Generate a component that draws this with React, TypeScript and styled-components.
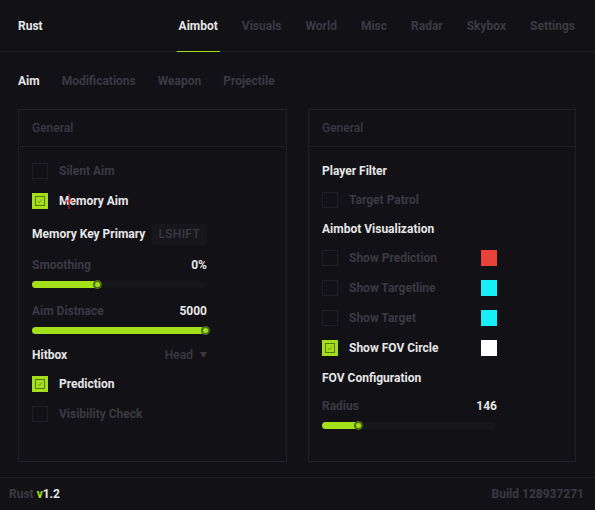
import styled, { createGlobalStyle } from 'styled-components'

const GlobalStyle = createGlobalStyle`
    html, body {
        margin: 0;
        padding: 0;
        background: #121115;
    }
    * { box-sizing: border-box; }
`

const LIME = '#a3e01a'
const TEXT = '#e6e6e8'
const DIM = '#3b3a42'

const Shell = styled.div`
    width: 595px;
    height: 510px;
    background: #121115;
    font-family: Roboto, 'Liberation Sans', sans-serif;
    font-weight: 700;
    font-size: 12px;
    color: ${TEXT};
    display: flex;
    flex-direction: column;
    position: relative;
    overflow: hidden;
`

const Header = styled.header`
    height: 52px;
    flex-shrink: 0;
    border-bottom: 1px solid #1f1e23;
    display: flex;
    align-items: center;
    padding: 0 20px 0 18px;
`

const Brand = styled.span`
    flex: 1;
    color: ${TEXT};
`

const Tabs = styled.nav`
    display: flex;
    gap: 24px;
    height: 100%;
`

const Tab = styled.span<{ $active?: boolean }>`
    position: relative;
    display: flex;
    align-items: center;
    color: ${(p) => (p.$active ? TEXT : DIM)};

    &::after {
        content: '';
        display: ${(p) => (p.$active ? 'block' : 'none')};
        position: absolute;
        left: -2px;
        right: -2px;
        bottom: -1px;
        height: 1px;
        background: ${LIME};
    }
`

const SubTabs = styled.div`
    height: 57px;
    flex-shrink: 0;
    display: flex;
    align-items: center;
    gap: 22px;
    padding: 0 18px;
`

const SubTab = styled.span<{ $active?: boolean }>`
    color: ${(p) => (p.$active ? TEXT : DIM)};
`

const Columns = styled.div`
    display: grid;
    grid-template-columns: 269px 268px;
    gap: 21px;
    padding: 0 18px;
`

const Panel = styled.section`
    height: 353px;
    border: 1px solid #211f25;
`

const PanelHead = styled.div`
    height: 37px;
    border-bottom: 1px solid #1f1e23;
    display: flex;
    align-items: center;
    padding-left: 13px;
    color: ${DIM};
    font-weight: 500;
`

const PanelBody = styled.div<{ $top: number }>`
    width: 188px;
    padding: ${(p) => p.$top}px 0 0 13px;
    display: flex;
    flex-direction: column;
`

const Row = styled.div<{ $h: number; $mt?: number }>`
    height: ${(p) => p.$h}px;
    margin-top: ${(p) => p.$mt ?? 0}px;
    display: flex;
    align-items: center;
    justify-content: space-between;
`

const CheckWrap = styled.div`
    display: flex;
    align-items: center;
    gap: 11px;
`

const Box = styled.span<{ $on?: boolean }>`
    width: 16px;
    height: 16px;
    display: flex;
    align-items: center;
    justify-content: center;
    border: 1px solid ${(p) => (p.$on ? LIME : '#1f1e24')};
    background: ${(p) => (p.$on ? LIME : 'transparent')};
`

const BoxInner = styled.span`
    width: 10px;
    height: 10px;
    border: 1px solid #55761a;
    display: flex;
    align-items: center;
    justify-content: center;
`

const Label = styled.span<{ $dim?: boolean }>`
    color: ${(p) => (p.$dim ? DIM : TEXT)};
`

const Key = styled.span`
    height: 21px;
    padding: 0 7px;
    display: flex;
    align-items: center;
    background: #17161a;
    border-radius: 3px;
    color: ${DIM};
    font-weight: 500;
    letter-spacing: 0.3px;
`

const Select = styled.span`
    color: ${DIM};
    font-weight: 500;
    display: flex;
    align-items: center;
    gap: 7px;
`

const Swatch = styled.span<{ $color: string }>`
    width: 16px;
    height: 16px;
    background: ${(p) => p.$color};
`

const Track = styled.div<{ $mt: number }>`
    margin-top: ${(p) => p.$mt}px;
    height: 7px;
    width: 174px;
    border-radius: 4px;
    background: #17161a;
    position: relative;
`

const Fill = styled.div`
    height: 100%;
    border-radius: 4px;
    background: ${LIME};
    position: relative;
`

const Thumb = styled.span`
    position: absolute;
    right: -4px;
    top: -1px;
    width: 9px;
    height: 9px;
    border-radius: 50%;
    background: ${LIME};
    border: 2px solid #4e6a12;
`

const Footer = styled.footer`
    margin-top: auto;
    height: 33px;
    border-top: 1px solid #1f1e23;
    display: flex;
    align-items: center;
    justify-content: space-between;
    padding: 0 11px 0 9px;
    color: ${DIM};
`

const Green = styled.span`
    color: ${LIME};
`

const White = styled.span`
    color: ${TEXT};
`

const Cursor = styled.svg`
    position: absolute;
    left: 64px;
    top: 194px;
`

function Check({ label, on, swatch }: { label: string; on?: boolean; swatch?: string }) {
    return (
        <Row $h={30}>
            <CheckWrap>
                <Box $on={on}>
                    {on && (
                        <BoxInner>
                            <svg width="6" height="6" viewBox="0 0 6 6">
                                <path d="M1 3.2 L2.4 4.5 L5 1.5" stroke="#6c9a18" strokeWidth="1" fill="none" />
                            </svg>
                        </BoxInner>
                    )}
                </Box>
                <Label $dim={!on}>{label}</Label>
            </CheckWrap>
            {swatch && <Swatch $color={swatch} />}
        </Row>
    )
}

function Slider({ label, value, pct, gap }: { label: string; value: string; pct: number; gap: number }) {
    return (
        <>
            <Row $h={20} $mt={gap}>
                <Label $dim>{label}</Label>
                <Label>{value}</Label>
            </Row>
            <Track $mt={6}>
                <Fill style={{ width: `${pct}%` }}>
                    <Thumb />
                </Fill>
            </Track>
        </>
    )
}

export default function App() {
    const tabs = ['Aimbot', 'Visuals', 'World', 'Misc', 'Radar', 'Skybox', 'Settings']
    const subTabs = ['Aim', 'Modifications', 'Weapon', 'Projectile']

    return (
        <Shell>
            <GlobalStyle />
            <Header>
                <Brand>Rust</Brand>
                <Tabs>
                    {tabs.map((t, i) => (
                        <Tab key={t} $active={i === 0}>{t}</Tab>
                    ))}
                </Tabs>
            </Header>
            <SubTabs>
                {subTabs.map((t, i) => (
                    <SubTab key={t} $active={i === 0}>{t}</SubTab>
                ))}
            </SubTabs>
            <Columns>
                <Panel>
                    <PanelHead>General</PanelHead>
                    <PanelBody $top={9}>
                        <Check label="Silent Aim" />
                        <Check label="Memory Aim" on />
                        <Row $h={36}>
                            <Label>Memory Key Primary</Label>
                            <Key>LSHIFT</Key>
                        </Row>
                        <Slider label="Smoothing" value="0%" pct={38} gap={3} />
                        <Slider label="Aim Distnace" value="5000" pct={100} gap={13} />
                        <Row $h={20} $mt={11}>
                            <Label>Hitbox</Label>
                            <Select>
                                Head
                                <svg width="7" height="6" viewBox="0 0 7 6">
                                    <path d="M0 0 H7 L3.5 6 Z" fill={DIM} />
                                </svg>
                            </Select>
                        </Row>
                        <Row $h={4} />
                        <Check label="Prediction" on />
                        <Check label="Visibility Check" />
                    </PanelBody>
                </Panel>
                <Panel>
                    <PanelHead>General</PanelHead>
                    <PanelBody $top={14}>
                        <Row $h={20}>
                            <Label>Player Filter</Label>
                        </Row>
                        <Row $h={4} />
                        <Check label="Target Patrol" />
                        <Row $h={20} $mt={4}>
                            <Label>Aimbot Visualization</Label>
                        </Row>
                        <Row $h={4} />
                        <Check label="Show Prediction" swatch="#e8423a" />
                        <Check label="Show Targetline" swatch="#17eef6" />
                        <Check label="Show Target" swatch="#17eef6" />
                        <Check label="Show FOV Circle" on swatch="#ffffff" />
                        <Row $h={20} $mt={5}>
                            <Label>FOV Configuration</Label>
                        </Row>
                        <Slider label="Radius" value="146" pct={21} gap={8} />
                    </PanelBody>
                </Panel>
            </Columns>
            <Footer>
                <span>
                    Rust <Green>v</Green><White>1.2</White>
                </span>
                <span>Build 128937271</span>
            </Footer>
            <Cursor width="10" height="16" viewBox="0 0 10 16">
                <path d="M5 0 V15 M1 7 H9" stroke="#e02020" strokeWidth="1" />
            </Cursor>
        </Shell>
    )
}
